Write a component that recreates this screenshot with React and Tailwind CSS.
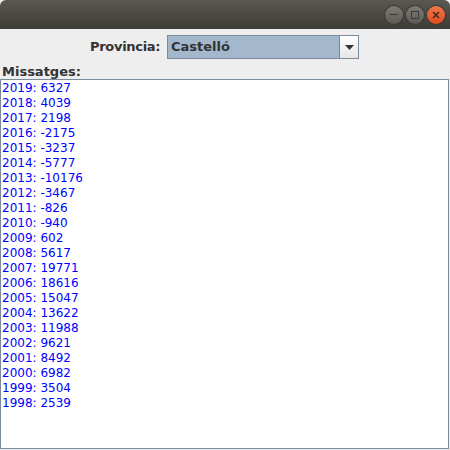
import React from 'react';

const rows = [
  ['2019', '6327'], ['2018', '4039'], ['2017', '2198'], ['2016', '-2175'],
  ['2015', '-3237'], ['2014', '-5777'], ['2013', '-10176'], ['2012', '-3467'],
  ['2011', '-826'], ['2010', '-940'], ['2009', '602'], ['2008', '5617'],
  ['2007', '19771'], ['2006', '18616'], ['2005', '15047'], ['2004', '13622'],
  ['2003', '11988'], ['2002', '9621'], ['2001', '8492'], ['2000', '6982'],
  ['1999', '3504'], ['1998', '2539'],
];

const font = { fontFamily: '"DejaVu Sans", sans-serif' };

const App = () => {
  return (
    <div className="flex h-[450px] w-[450px] flex-col overflow-hidden bg-[#eeeeee]" style={font}>
      {/* title bar */}
      <div className="flex h-[29px] shrink-0 items-center justify-end gap-[3px] rounded-t-[6px] bg-gradient-to-b from-[#5a5850] to-[#3d3c38] pr-[5px]">
        <div className="flex h-[18px] w-[18px] items-center justify-center rounded-full bg-gradient-to-b from-[#7d7b75] to-[#5c5a55] shadow-[0_0_0_1px_#3a3935]">
          <div className="h-[1.5px] w-[8px] bg-[#3c3b37]" />
        </div>
        <div className="flex h-[18px] w-[18px] items-center justify-center rounded-full bg-gradient-to-b from-[#7d7b75] to-[#5c5a55] shadow-[0_0_0_1px_#3a3935]">
          <div className="h-[8px] w-[8px] border-[1.5px] border-[#3c3b37]" />
        </div>
        <div className="flex h-[18px] w-[18px] items-center justify-center rounded-full bg-gradient-to-b from-[#f2784a] to-[#de4a1c] shadow-[0_0_0_1px_#3a3935]">
          <svg width="8" height="8" viewBox="0 0 8 8">
            <path d="M1 1L7 7M7 1L1 7" stroke="#3c2a20" strokeWidth="1.5" />
          </svg>
        </div>
      </div>

      {/* province selector */}
      <div className="mt-[6px] flex h-[24px] shrink-0 items-center pl-[90px]">
        <span className="mr-[8px] w-[69px] whitespace-nowrap text-[13px] font-bold tracking-[-0.3px] text-[#333333]">Provincia:</span>
        <div className="flex h-[24px] w-[192px] border border-[#7a8a99]">
          <div className="flex flex-1 items-center bg-[#a3b8cc] pl-[3px] text-[13px] font-bold text-[#333333]">
            Castelló
          </div>
          <div className="flex w-[19px] items-center justify-center border-l border-[#7a8a99] bg-gradient-to-b from-[#ffffff] to-[#e6e6e6]">
            <svg width="9" height="5" viewBox="0 0 9 5">
              <path d="M0 0H9L4.5 5Z" fill="#333333" />
            </svg>
          </div>
        </div>
      </div>

      <div className="mt-[6px] pl-[2px] text-[13px] font-bold leading-[14px] text-[#333333]">Missatges:</div>

      {/* messages */}
      <div className="mr-[1px] mb-[1px] flex-1 border border-[#7a8a99] bg-white pl-[1px] pt-[1px]">
        {rows.map(([y, v]) => (
          <div key={y} className="text-[12px] leading-[15px] text-[#0000ff]">
            {y}: {v}
          </div>
        ))}
      </div>
    </div>
  );
};

export default App;
